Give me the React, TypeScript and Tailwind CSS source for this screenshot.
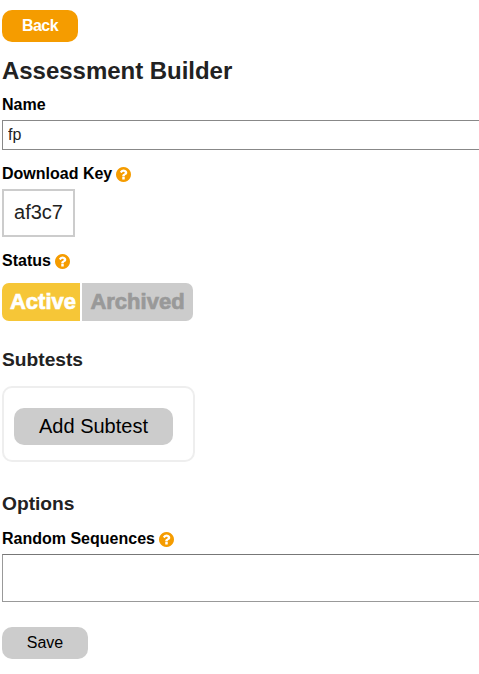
function Help() {
  return (
    <button type="button" aria-label="Help" className="mt-px text-[#f59c00]">
      <svg viewBox="128 128 1536 1536" className="block size-[15px]" fill="currentColor">
        <path d="M1024 1376v-192q0-14-9-23t-23-9h-192q-14 0-23 9t-9 23v192q0 14 9 23t23 9h192q14 0 23-9t9-23zm256-672q0-88-55.5-163t-138.5-116-170-41q-243 0-371 213-15 24 8 42l132 100q7 6 19 6 16 0 25-12 53-68 86-92 34-24 86-24 48 0 85.5 26t37.5 59q0 38-20 61t-68 45q-63 28-115.5 86.5t-52.5 125.5v36q0 14 9 23t23 9h192q14 0 23-9t9-23q0-19 21.5-49.5t54.5-49.5q32-18 49-28.5t46-35 44.5-48 28-60.5 12.5-81zm384 192q0 209-103 385.5t-279.5 279.5-385.5 103-385.5-103-279.5-279.5-103-385.5 103-385.5 279.5-279.5 385.5-103 385.5 103 279.5 279.5 103 385.5z" />
      </svg>
    </button>
  );
}

function Label({ text, help = false }: { text: string; help?: boolean }) {
  return (
    <div className="flex h-5 items-center gap-1 font-bold text-black">
      <span className="whitespace-nowrap">{text}</span>
      {help && <Help />}
    </div>
  );
}

export default function App() {
  return (
    <main className="h-[674px] w-full overflow-hidden bg-white pt-2.5 pl-0.5 font-['Liberation_Sans',Arial,sans-serif] text-base leading-5 text-[#222]">
      <button className="block h-8 w-[76px] rounded-[10px] bg-[#f59c00] font-bold tracking-[-0.5px] text-white">
        Back
      </button>
      <h1 className="mt-3.5 h-[30px] text-2xl leading-[30px] font-bold tracking-[-0.03px]">Assessment Builder</h1>
      <div className="mt-[9px]">
        <Label text="Name" />
      </div>
      <input
        type="text"
        defaultValue="fp"
        className="mt-[5px] block h-[30px] w-[600px] border border-[#888] bg-white px-[5px] text-[#222]"
      />
      <div className="mt-3.5">
        <Label text="Download Key" help />
      </div>
      <div className="mt-[5px] flex h-12 w-[73px] items-center justify-center border-2 border-[#ccc] pb-0.5 text-xl">af3c7</div>
      <div className="mt-3.5">
        <Label text="Status" help />
      </div>
      <div className="mt-3 flex h-[38px] gap-0.5 text-[22px] font-bold">
        <button className="w-[78px] rounded-l-[7px] bg-[#f6c637] pl-1 text-white [-webkit-text-stroke:0.7px_currentColor]">Active</button>
        <button className="w-[111px] rounded-r-[7px] bg-[#ccc] text-[#999] [-webkit-text-stroke:0.7px_currentColor]">Archived</button>
      </div>
      <h2 className="mt-[27px] h-6 text-[19.2px] leading-6 font-bold">Subtests</h2>
      <div className="mt-3.5 flex h-[76px] w-[193px] items-start rounded-[10px] border-2 border-[#eee] pt-5 pl-2.5">
        <button className="h-[37px] w-[159px] rounded-[10px] bg-[#ccc] pb-px text-xl text-black">Add Subtest</button>
      </div>
      <h2 className="mt-[30px] h-6 text-[19.2px] leading-6 font-bold">Options</h2>
      <div className="mt-[13px]">
        <Label text="Random Sequences" help />
      </div>
      <textarea className="mt-[5px] block h-12 w-[600px] resize-none border border-[#999] border-t-[#777] bg-white p-1" />
      <button className="mt-[25px] block h-8 w-[86px] rounded-[10px] bg-[#ccc] text-black">Save</button>
    </main>
  );
}
